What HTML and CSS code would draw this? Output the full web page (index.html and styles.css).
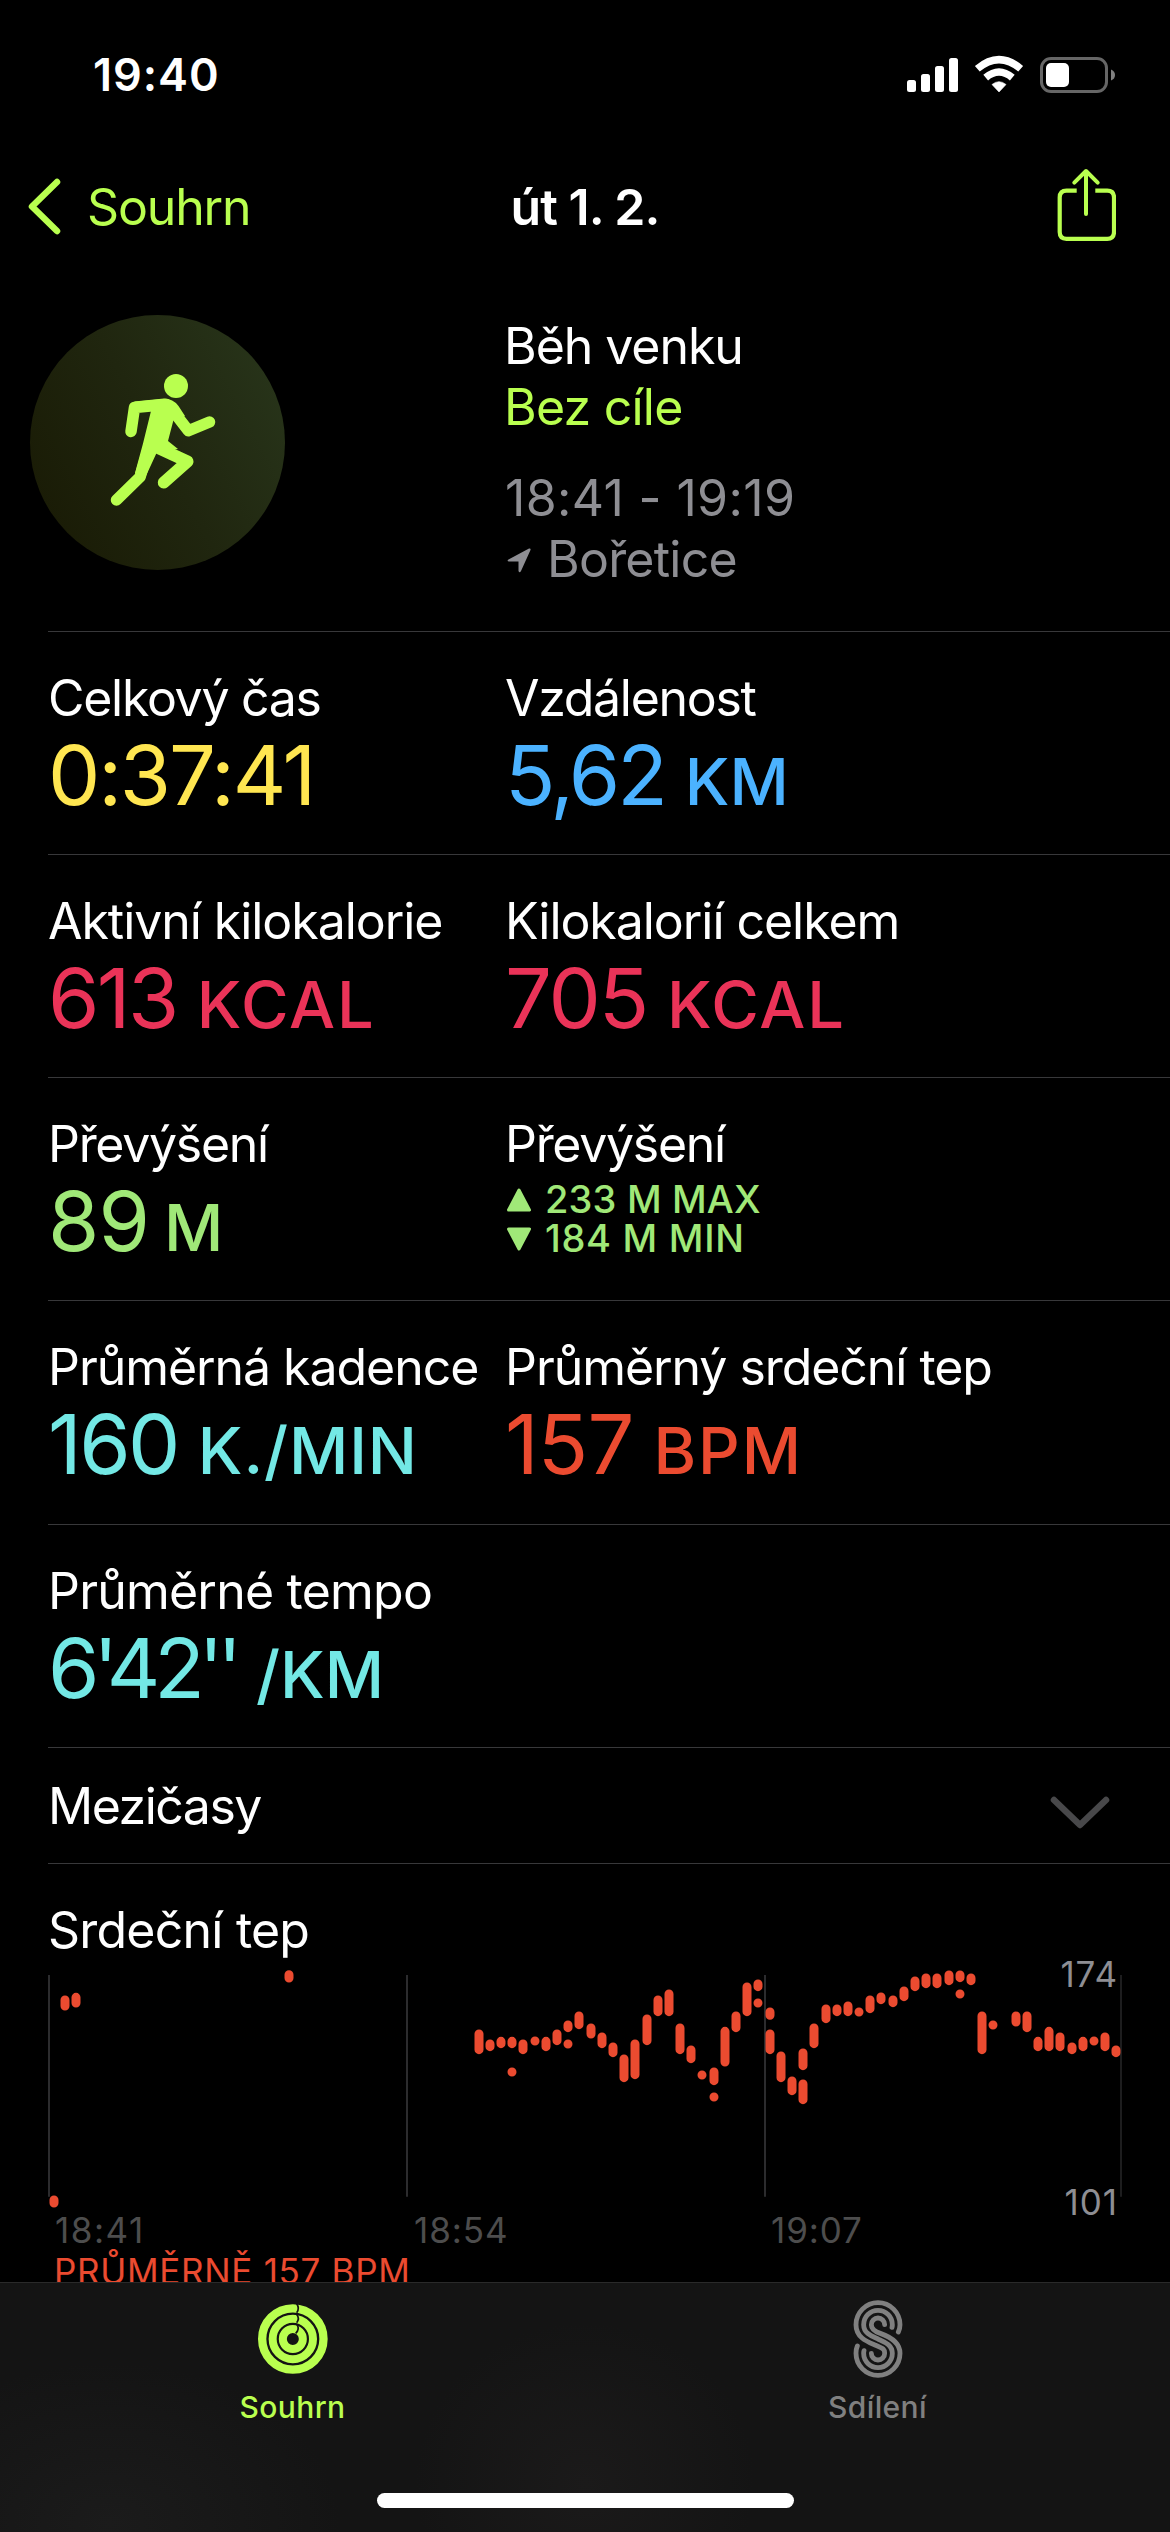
FILE: index.html
```
<!DOCTYPE html>
<html lang="cs">
<head>
<meta charset="utf-8">
<title>út 1. 2. – Souhrn</title>
<link rel="stylesheet" href="styles.css">
</head>
<body>
<header class="status">
  <span class="clock">19:40</span>
  <svg class="status-icons" width="210" height="40" viewBox="0 0 210 40" aria-hidden="true">
    <g fill="#fff">
      <rect x="0" y="26" width="9" height="12" rx="2.5"/>
      <rect x="14" y="20" width="9" height="18" rx="2.5"/>
      <rect x="28" y="12" width="9" height="26" rx="2.5"/>
      <rect x="42" y="4" width="9" height="34" rx="2.5"/>
      <path d="M92 38 L85 30.5 Q92 24.800 99 30.500Z" stroke="#fff" stroke-width="0.600" stroke-linejoin="round"/>
    </g>
    <g fill="none" stroke="#fff" stroke-width="7.400">
      <path d="M78.700 23.600 Q92 12.400 105.300 23.600"/>
      <path d="M70.300 14.800 Q92 -3.600 113.700 14.800"/>
    </g>
    <rect x="134.500" y="4.500" width="65" height="33" rx="9.500" fill="none" stroke="#666" stroke-width="3"/>
    <rect x="139" y="9" width="23" height="24" rx="5" fill="#fff"/>
    <path d="M204 15.500 Q208 17 208 21 Q208 25 204 26.500Z" fill="#808080"/>
  </svg>
</header>

<nav class="navbar">
  <a class="back">
    <svg width="40" height="60" viewBox="0 0 40 60" aria-hidden="true"><path d="M33 5 L8 29.500 L33 54" fill="none" stroke="#b9ff4f" stroke-width="6.500" stroke-linecap="round" stroke-linejoin="round"/></svg>
    <span>Souhrn</span>
  </a>
  <h1>út 1. 2.</h1>
  <svg class="share" width="60" height="74" viewBox="0 0 60 74" aria-hidden="true">
    <g fill="none" stroke="#b9ff4f" stroke-width="4.200" stroke-linejoin="round">
      <path d="M20.700 22.600 H10.500 Q3.700 22.600 3.700 29.400 V64 Q3.700 70.800 10.500 70.800 H51.300 Q58 70.800 58 64 V29.400 Q58 22.600 51.300 22.600 H39.300"/>
      <path d="M30 46 V4 M18.300 14.700 L30 3 L41.700 14.700" stroke-linecap="round" stroke-width="4"/>
    </g>
  </svg>
</nav>

<main>
  <section class="hero">
    <div class="badge">
      <svg width="255" height="255" viewBox="0 0 255 255" aria-hidden="true">
        <g fill="none" stroke="#b9ff4f" stroke-width="11.500" stroke-linecap="round" stroke-linejoin="round">
          <path d="M136 89.500 L104.500 92.500 L101 116.500"/>
          <path d="M140 92 L158.400 115.700 L179.500 107"/>
          <path d="M119 132 L110 162 L86.500 185"/>
          <path d="M124 131 L157.500 146.500 L133.800 167.500" stroke-width="12"/>
        </g>
        <path d="M104 86.500 L134 83.500 Q143 83.500 148.500 91 L155 101 L143.500 105 L138 126 L148 134 L127 137 L115 163 L105 158 L113 128.500 L121 96 Z" fill="#b9ff4f"/>
        <circle cx="146" cy="71" r="12" fill="#b9ff4f"/>
      </svg>
    </div>
    <div class="hero-text">
      <p>Běh venku</p>
      <p class="lime wide">Bez cíle</p>
      <p class="when">18:41 - 19:19</p>
      <p class="where wide">
        <svg width="25" height="26" viewBox="0 0 25 26" aria-hidden="true"><path d="M1.500 12.500 L22 1.500 Q24 1 23.500 3 L14 24 Q12.500 26.500 11.500 24 L11.500 14.500 L2 14.500 Q-0.500 14 1.500 12.500Z" fill="#8e8e93"/></svg>Bořetice</p>
    </div>
  </section>

  <section class="row">
    <div class="cell"><p class="tight">Celkový čas</p><div class="value yellow"><b class="n2">0:37:41</b></div></div>
    <div class="cell"><p class="tight">Vzdálenost</p><div class="value blue"><b class="n3">5,62</b><i>KM</i></div></div>
  </section>
  <section class="row">
    <div class="cell"><p>Aktivní kilokalorie</p><div class="value red"><b>613</b><i class="u2">KCAL</i></div></div>
    <div class="cell"><p>Kilokalorií celkem</p><div class="value red"><b class="n2">705</b><i class="u2">KCAL</i></div></div>
  </section>
  <section class="row">
    <div class="cell"><p class="tight">Převýšení</p><div class="value narrow green"><b class="n1">89</b><i>M</i></div></div>
    <div class="cell"><p class="tight">Převýšení</p>
      <ul class="range green">
        <li><svg width="24" height="24" viewBox="0 0 24 24" aria-hidden="true"><path d="M12 2 L22.500 22 H1.500Z" fill="#a0e878" stroke="#a0e878" stroke-width="3" stroke-linejoin="round"/></svg>233 M MAX</li>
        <li class="low"><svg width="24" height="24" viewBox="0 0 24 24" aria-hidden="true"><path d="M12 22 L22.500 2 H1.500Z" fill="#a0e878" stroke="#a0e878" stroke-width="3" stroke-linejoin="round"/></svg>184 M MIN</li>
      </ul>
    </div>
  </section>
  <section class="row tall">
    <div class="cell"><p>Průměrná kadence</p><div class="value cyan"><b>160</b><i class="u1">K./MIN</i></div></div>
    <div class="cell"><p>Průměrný srdeční tep</p><div class="value orange"><b class="n1">157</b><i class="u2">BPM</i></div></div>
  </section>
  <section class="row">
    <div class="cell"><p class="wide">Průměrné tempo</p><div class="value cyan"><b class="pace">6'42''</b><i>/KM</i></div></div>
  </section>
  <section class="splits">
    <p class="tighter">Mezičasy</p>
    <svg width="60" height="34" viewBox="0 0 60 34" aria-hidden="true"><path d="M4 4 L30 29 L56 4" fill="none" stroke="#48484a" stroke-width="6.500" stroke-linecap="round" stroke-linejoin="round"/></svg>
  </section>
  <section class="heart">
    <p class="wide">Srdeční tep</p>
    <div class="chart">
      <svg width="1170" height="249" viewBox="0 60 3510 747" aria-hidden="true">
        <g fill="none" stroke="#2c2c2e" stroke-width="6">
          <path d="M147 105V770 M1221 105V770 M2295 105V770"/>
          <path d="M3363 105V770" stroke-width="4"/>
        </g>
        <path fill="none" stroke="#eb4b30" stroke-width="27" stroke-linecap="round" d="M162 780V789 M195 180V198 M228 172V189 M867 104V114
          M1437 282V329 M1470 312V320 M1503 304V311 M1536 304V311 M1536 396h0 M1569 312V329 M1605 303h0 M1638 304V320 M1671 282V302 M1704 255V263 M1704 312h0
          M1737 228V254 M1773 264V282 M1806 291V311 M1839 321V338 M1872 357V413 M1905 312V404 M1941 237V302 M1974 180V215 M2007 162V215 M2040 264V329
          M2073 330V356 M2106 405h0 M2142 396V422 M2142 471h0 M2175 274V366 M2208 228V263 M2241 141V215 M2274 132V140 M2274 189h0 M2310 216V226 M2310 282V329
          M2343 348V413 M2376 423V452 M2409 339V377 M2409 432V479 M2442 264V311 M2478 207V236 M2511 207V215 M2544 198V215 M2577 216h0 M2610 180V206
          M2643 171V179 M2679 180V188 M2712 153V170 M2745 123V140 M2778 114V131 M2811 114V131 M2847 105V122 M2880 105V113 M2880 162h0 M2913 114V122
          M2946 228V329 M2979 255h0 M3048 228V246 M3081 228V263 M3114 304V320 M3147 274V320 M3180 291V320 M3216 321V329 M3249 304V320 M3282 303h0
          M3315 291V320 M3348 330V338"/>
      </svg>
      <div class="scale"><span>174</span><span>101</span></div>
    </div>
    <div class="times"><span class="first">18:41</span><span>18:54</span><span>19:07</span></div>
    <p class="average">PRŮMĚRNĚ 157 BPM</p>
  </section>
</main>

<footer class="tabbar">
  <div class="tabs">
    <a class="tab active">
      <svg width="80" height="80" viewBox="0 0 240 240" aria-hidden="true">
        <g fill="none" stroke="#b9ff4f">
          <circle cx="119.500" cy="120" r="92" stroke-width="25"/>
          <circle cx="119.500" cy="120" r="60.500" stroke-width="24"/>
          <circle cx="119.500" cy="120" r="30" stroke-width="24"/>
        </g>
        <path d="M131 14 Q141 28 131 41 M131 46 Q141 59 131 71 M132 77 Q141 91 128 103" fill="none" stroke="#141414" stroke-width="5"/>
      </svg>
      <span>Souhrn</span>
    </a>
    <a class="tab">
      <svg width="80" height="80" viewBox="0 0 240 240" aria-hidden="true">
        <g transform="translate(-172 -118)" fill="none" stroke="#808080" stroke-width="14.500" stroke-linecap="round">
          <path d="M353 217 Q358 205 358 195 A66 66 0 0 0 226 195 C226 235 262 247 285 257 S312 268 312 281 A20 20 0 0 1 272 281"/>
          <path d="M334 203 Q335 199 335 195 A43 43 0 0 0 249 195 C249 222 275 230 292 238 S335 254 335 281 A43 43 0 0 1 249 281 Q249 276 250 273"/>
          <path d="M312 195 A20 20 0 0 0 272 195 C272 210 284 216 299 221 C322 229 358 245 358 281 A66 66 0 0 1 226 281 Q226 268 230 259"/>
        </g>
      </svg>
      <span>Sdílení</span>
    </a>
  </div>
  <div class="home"></div>
</footer>
</body>
</html>
```
FILE: styles.css
```
* { box-sizing: border-box; margin: 0; padding: 0; }

body {
  width: 1170px;
  height: 2532px;
  display: flex;
  flex-direction: column;
  overflow: hidden;
  background: #000;
  color: #fff;
  font-family: Inter, "Noto Sans", sans-serif;
}

svg { display: block; flex: none; }

.status {
  height: 149px;
  flex: none;
  display: flex;
  align-items: center;
  justify-content: space-between;
  padding: 0 53px 0 93px;
}
.clock { font-size: 45px; font-weight: 600; letter-spacing: 0.97px; }
.status-icons { margin-top: -2px; }

.navbar {
  height: 116px;
  flex: none;
  display: grid;
  grid-template-columns: 1fr auto 1fr;
  align-items: center;
  padding: 0 24px;
  font-size: 50px;
  line-height: 60px;
}
.back { display: flex; align-items: center; gap: 23px; color: #b9ff4f; letter-spacing: -1.16px; }
.navbar h1 { font-size: 50px; font-weight: 600; letter-spacing: -0.96px; }
.share { justify-self: end; margin: -4px 30px 0 0; }

main { flex: 1; min-height: 0; overflow: hidden; font-size: 50px; }

p { line-height: 60px; letter-spacing: -1.05px; white-space: nowrap; }
p.wide { letter-spacing: -0.78px; }
p.tight { letter-spacing: -1.3px; }
p.tighter { letter-spacing: -1.5px; }

.lime { color: #b9ff4f; }
.yellow { color: #ffe651; }
.blue { color: #4bb2ff; }
.red { color: #ea3358; }
.green { color: #a0e878; }
.cyan { color: #73e8e5; }
.orange { color: #eb4b30; }

.hero {
  height: 366px;
  display: grid;
  grid-template-columns: 474px 1fr;
  padding: 50px 0 0 30px;
}
.badge {
  width: 255px;
  height: 255px;
  border-radius: 50%;
  background: linear-gradient(62deg, #1a1c06 12%, #20260f 50%, #273319 88%);
}
.hero-text { padding-top: 1px; }
.hero-text p { line-height: 61px; }
.hero-text .when { margin-top: 30px; letter-spacing: 0.37px; color: #8e8e93; padding-left: 1px; }
.hero-text .where { display: flex; align-items: center; color: #8e8e93; gap: 15px; padding-left: 3px; }

.row, .splits, .heart { margin-left: 48px; border-top: 1px solid #38383a; }
.row {
  height: 223px;
  display: grid;
  grid-template-columns: 457px 1fr;
  padding-top: 36px;
}
.row.tall { height: 224px; }
.value { height: 95px; line-height: 95px; display: flex; align-items: baseline; gap: 20px; }
.value.narrow { gap: 15px; }
.value b { font-size: 83px; font-weight: 400; letter-spacing: -2.6px; }
.value i { font-size: 65px; font-weight: 500; font-style: normal; }
.value .n1 { letter-spacing: -0.9px; }
.value .n2 { letter-spacing: -2.2px; }
.value .n3 { letter-spacing: -3.1px; }
.value .pace { letter-spacing: -6.2px; }
.value .u1 { letter-spacing: 0.9px; }
.value .u2 { letter-spacing: 1.9px; }

.range { list-style: none; margin-top: 6px; padding-left: 2px; font-size: 38px; font-weight: 500; line-height: 39px; letter-spacing: 0.17px; }
.range li { display: flex; align-items: center; gap: 14px; }
.range .low { letter-spacing: 0.7px; }

.splits { height: 116px; display: flex; align-items: center; justify-content: space-between; padding-right: 60px; }
.splits svg { margin-top: 14px; }

.heart { padding-top: 36px; }
.chart { position: relative; margin-left: -48px; }
.scale {
  position: absolute;
  top: -7px;
  right: 52px;
  height: 270px;
  display: flex;
  flex-direction: column;
  justify-content: space-between;
  text-align: right;
  color: #8e8e93;
  font-size: 35px;
  line-height: 42px;
  letter-spacing: 1px;
}
.times {
  display: grid;
  grid-template-columns: 359px 357px 1fr;
  padding-left: 7px;
  color: #4d4d4d;
  font-size: 35px;
  line-height: 42px;
  letter-spacing: 0.92px;
}
.times .first { letter-spacing: 1.5px; }
.average { padding-left: 6px; color: #eb4b30; font-size: 35px; line-height: 41px; letter-spacing: 0.7px; }

.tabbar {
  height: 250px;
  flex: none;
  display: flex;
  flex-direction: column;
  align-items: center;
  justify-content: space-between;
  padding-bottom: 24px;
  border-top: 1px solid #2a2a2a;
  background:
    radial-gradient(ellipse 170px 160px at 585px 200px, #1b1a1a, transparent),
    radial-gradient(ellipse 230px 160px at 110px 240px, #1b1b1b, transparent),
    #141414;
}
.tabs { display: grid; grid-template-columns: 1fr 1fr; width: 100%; padding-top: 16px; }
.tab {
  display: flex;
  flex-direction: column;
  align-items: center;
  gap: 10px;
  color: #808080;
  font-size: 30px;
  font-weight: 500;
  line-height: 36px;
  letter-spacing: 0.4px;
}
.tab.active { color: #b9ff4f; }
.home { width: 417px; height: 15px; border-radius: 8px; background: #fff; }
```
